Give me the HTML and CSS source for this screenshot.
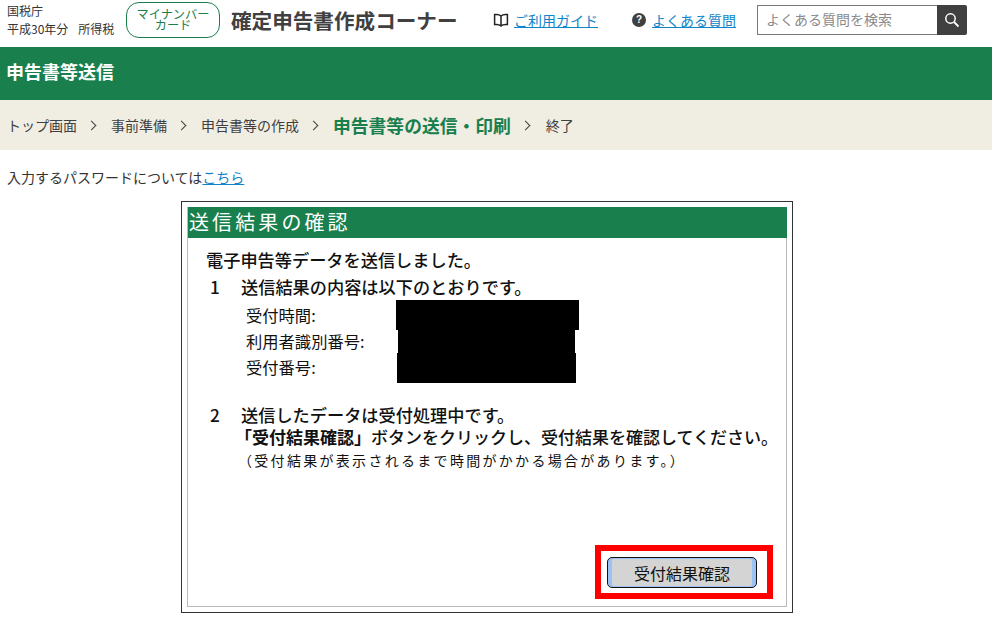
FILE: index.html
```html
<!DOCTYPE html>
<html lang="ja">
<head>
<meta charset="utf-8">
<title>申告書等送信</title>
<link rel="stylesheet" href="styles.css">
</head>
<body>
<header class="top">
  <div class="org"><div>国税庁</div><div>平成30年分<span class="tax">所得税</span></div></div>
  <div class="badge">マイナンバー<br>カード</div>
  <div class="corner">確定申告書作成コーナー</div>
  <a class="tlink guide" href="#">
    <svg class="ico" width="16" height="14" viewBox="0 0 16 14"><path d="M8 3C6.5 1.6 4 1.2 1.6 1.6V11.6C4 11.2 6.5 11.6 8 13C9.5 11.6 12 11.2 14.4 11.6V1.6C12 1.2 9.500 1.600 8 3ZM8 3V13" fill="none" stroke="#222" stroke-width="1.500"/></svg>
    <span>ご利用ガイド</span></a>
  <a class="tlink faq" href="#">
    <span class="q">?</span>
    <span>よくある質問</span></a>
  <div class="search">
    <div class="sinput">よくある質問を検索</div>
    <div class="sbtn"><svg width="16" height="16" viewBox="0 0 16 16"><circle cx="6.500" cy="6.500" r="4.700" fill="none" stroke="#fff" stroke-width="1.500"/><path d="M10 10L14.500 14.500" stroke="#fff" stroke-width="1.800"/></svg></div>
  </div>
</header>
<div class="band">申告書等送信</div>
<nav class="crumbs">
  <span>トップ画面</span><i class="chev"></i>
  <span>事前準備</span><i class="chev"></i>
  <span>申告書等の作成</span><i class="chev"></i>
  <b class="cur">申告書等の送信・印刷</b><i class="chev last"></i>
  <span>終了</span>
</nav>
<p class="note">入力するパスワードについては<a href="#">こちら</a></p>
<main class="frame">
  <div class="inner">
    <h1 class="dtitle">送信結果の確認</h1>
    <div class="dbody">
      <p class="lead">電子申告等データを送信しました。</p>
      <div class="item first"><span class="num">1</span><span>送信結果の内容は以下のとおりです。</span></div>
      <dl class="rows">
        <dt>受付時間:</dt>
        <dt>利用者識別番号:</dt>
        <dt>受付番号:</dt>
      </dl>
      <div class="item second"><span class="num">2</span><span>送信したデータは受付処理中です。</span></div>
      <p class="line"><b>「受付結果確認」</b>ボタンをクリックし、受付結果を確認してください。</p>
      <p class="sub">（受付結果が表示されるまで時間がかかる場合があります。）</p>
      <div class="actions"><button class="btn" type="button">受付結果確認</button></div>
    </div>
  </div>
  <div class="redact r1"></div>
  <div class="redact r2"></div>
  <div class="redact r3"></div>
  <div class="mark"></div>
</main>
</body>
</html>
```
FILE: styles.css
```css
* { box-sizing: border-box; }
html, body { margin: 0; padding: 0; }
body {
  width: 992px;
  height: 628px;
  overflow: hidden;
  background: #fff;
  color: #333;
  font-family: "Noto Sans CJK JP", "Liberation Sans", sans-serif;
  font-size: 14px;
}
.top { display: flex; align-items: center; height: 47px; padding: 0 0 7px 7px; }
.org { width: 119px; font-size: 12px; line-height: 18px; color: #333; }
.org div { white-space: nowrap; }
.tax { margin-left: 10px; }
.badge {
  width: 94px; height: 36px; border: 1px solid #19804d; border-radius: 13px;
  color: #19804d; font-size: 12.200px; line-height: 11px; text-align: center;
  padding-top: 6px; white-space: nowrap;
}
.corner { margin-left: 11px; width: 262px; font-size: 20.600px; font-weight: 700; color: #404040; white-space: nowrap; }
.tlink { display: flex; align-items: center; color: #0f84c8; font-size: 14px; text-decoration: none; white-space: nowrap; }
.tlink span:last-child { text-decoration: underline; }
.guide { gap: 5px; width: 139px; }
.faq { gap: 6px; width: 125px; }
.q {
  width: 14px; height: 14px; border-radius: 50%; background: #404040; color: #fff;
  font: 700 10px/14px "Liberation Sans", sans-serif; text-align: center;
}
.search { display: flex; height: 30px; width: 210px; }
.sinput {
  width: 180px; border: 1px solid #777; border-right: 0; color: #8a8a8a;
  font-size: 14px; line-height: 27px; padding-left: 8px; white-space: nowrap;
}
.sbtn { width: 30px; background: #404040; border-radius: 0 2px 2px 0; display: flex; align-items: center; justify-content: center; }
.band {
  height: 53px; background: #19804d; color: #fff; font-size: 18px; font-weight: 700;
  line-height: 49px; padding-left: 6px;
}
.crumbs {
  display: flex; align-items: center; height: 50px; background: #f0ede3; padding-left: 7px;
  font-size: 14px; color: #404040; white-space: nowrap;
}
.chev { width: 7px; height: 7px; border-top: 1.500px solid #404040; border-right: 1.500px solid #404040; transform: rotate(45deg); margin: 0 16px 0 11px; }
.chev.last { margin: 0 17px 0 11px; }
.cur { color: #19804d; font-size: 17.800px; }
.note { margin: 0; padding-left: 7px; height: 51px; line-height: 55px; font-size: 14px; color: #333; }
.note a { color: #0f84c8; }
.frame {
  position: relative; width: 612px; height: 412px; margin-left: 181px;
  border: 1px solid #333; padding: 5px;
  font-family: "Noto Sans CJK JP", sans-serif; color: #111;
}
.inner { height: 400px; border: 1px solid #bbb; border-top: 0; }
.dtitle {
  margin: 0 -1px 0 0; height: 31px; background: #19804d; color: #fff; font-size: 20px;
  font-weight: 400; line-height: 30px; padding-left: 1px; letter-spacing: 3.100px; white-space: nowrap;
}
.dbody { padding: 11px 0 0 18px; font-size: 17.200px; line-height: 22px; font-weight: 500; }
.dbody p { margin: 0; }
.lead { height: 27px; }
.item { display: flex; }
.num { width: 35px; padding-left: 4px; }
.rows { margin: 0; padding: 4px 0 0 40px; height: 106px; font-size: 16.300px; font-weight: 400; }
.rows dt { height: 26px; line-height: 26px; margin: 0; }
.line { white-space: nowrap; padding-left: 29px; font-size: 17px; }
.sub { font-size: 14px; font-weight: 400; letter-spacing: 2.300px; padding-left: 32px; margin-top: 1px !important; white-space: nowrap; }
.actions { position: absolute; left: 425px; top: 355px; }
.btn {
  display: block; width: 150px; height: 31px; background: #d4d4d4; border: 1px solid #111;
  border-radius: 5px; box-shadow: inset 4px 0 #9cc2f5, inset -4px 0 #9cc2f5, inset 0 1px #9cc2f5, inset 0 -1px #9cc2f5;
  font: 16px "Noto Sans CJK JP", sans-serif; color: #111; padding: 0;
}
.redact { position: absolute; background: #000; }
.r1 { left: 214px; top: 98px; width: 183px; height: 30px; }
.r2 { left: 216px; top: 128px; width: 177px; height: 24px; }
.r3 { left: 215px; top: 151px; width: 179px; height: 30px; }
.mark { position: absolute; left: 413px; top: 343px; width: 178px; height: 54px; border: 6px solid #f00; }
```
